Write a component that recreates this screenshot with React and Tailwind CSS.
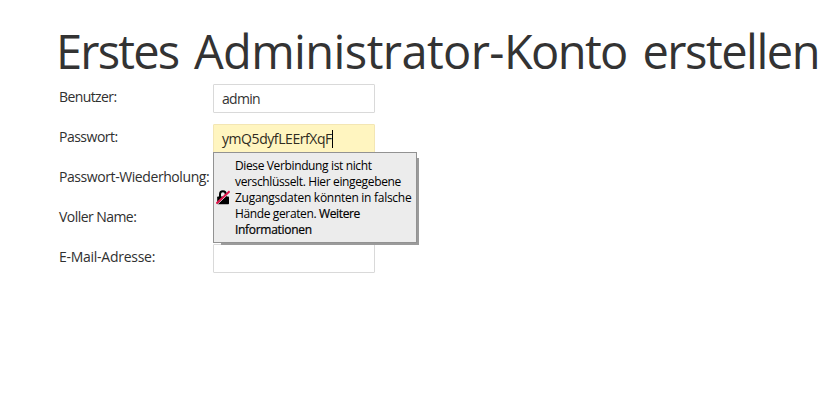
const labelCls = "w-[154px] pt-[3px] pl-[2px] text-[14px] leading-[20px] whitespace-nowrap text-[#303030]";
const fieldCls = "flex h-[29px] w-[162px] items-center rounded-[1px] border px-[8px] text-[14px] leading-[20px] whitespace-nowrap";
const boldCls = "[-webkit-text-stroke:0.2px_black]";

function Row({ label, spacing, children }) {
  return (
    <div className="flex h-[40px] items-start">
      <div className={labelCls}>
        <span className={spacing}>{label}</span>
      </div>
      {children}
    </div>
  );
}

function InsecureLock() {
  return (
    <svg width="14" height="15" viewBox="0 0 14 15" className="block shrink-0">
      <path d="M4 7.5V4.2a2.9 2.9 0 0 1 5.8 0V7.5" fill="none" stroke="#000" strokeWidth="2" />
      <rect x="1.2" y="6.4" width="11.8" height="7.8" rx="0.8" fill="#000" />
      <path d="M1.2 14.4L14.2 2.2" stroke="#ececec" strokeWidth="1" />
      <path d="M0.4 13.6L13.6 1.2" stroke="#e0184c" strokeWidth="2" />
    </svg>
  );
}

function Warning() {
  return (
    <div className="absolute top-[27px] left-[-1px] z-10 h-[91px] w-[204px]">
      <div className="absolute top-[6px] left-[8px] h-[87px] w-[198px] bg-[#9b9b9b] blur-[0.4px]" />
      <div className="relative flex h-full items-center border border-[#929292] bg-[#ececec] pl-[2px] text-black">
        <InsecureLock />
        <div className="ml-[5px] text-[12px] leading-[16px] whitespace-nowrap">
          <div><span className="tracking-[-0.37px]">Diese Verbindung ist nicht</span></div>
          <div><span className="tracking-[-0.36px]">verschlüsselt. Hier eingegebene</span></div>
          <div><span className="tracking-[-0.28px]">Zugangsdaten könnten in falsche</span></div>
          <div><span className="tracking-[-0.37px]">Hände geraten. <span className={boldCls}>Weitere</span></span></div>
          <div><span className={`${boldCls} tracking-[-0.3px]`}>Informationen</span></div>
        </div>
      </div>
    </div>
  );
}

export default function App() {
  return (
    <div className="h-[416px] w-[822px] overflow-hidden bg-white pt-[19px] pl-[57px] font-['Open_Sans',sans-serif]">
      <h1 className="-ml-[1px] h-[65px] text-[47px] leading-[64px] whitespace-nowrap text-[#333333] [word-spacing:5px]">
        <span className="tracking-[-1.8px]">Erstes </span>
        <span className="tracking-[-0.6px]">Administrator-</span>
        <span className="tracking-[-1.6px]">Konto </span>
        <span className="tracking-[-1.5px]">erstellen</span>
      </h1>
      <Row label="Benutzer:" spacing="tracking-[-0.6px]">
        <div className={`${fieldCls} ml-[2px] border-[#d9d9d9] bg-white text-[#333333]`}>
          <span className="tracking-[-0.7px]">admin</span>
        </div>
      </Row>
      <Row label="Passwort:" spacing="tracking-[-0.5px]">
        <div className={`${fieldCls} relative ml-[2px] border-[#f3e6b4] bg-[#fff5c0] text-[#302c20]`}>
          <span className="tracking-[-0.43px]">ymQ5dyfLEErfXqF</span>
          <span className="h-[18px] w-px bg-black" />
          <Warning />
        </div>
      </Row>
      <Row label="Passwort-Wiederholung:" spacing="tracking-[-0.42px]">
        <div className={`${fieldCls} ml-[2px] border-[#d9d9d9] bg-white`} />
      </Row>
      <Row label="Voller Name:" spacing="tracking-[-0.55px]">
        <div className={`${fieldCls} ml-[2px] border-[#d9d9d9] bg-white`} />
      </Row>
      <Row label="E-Mail-Adresse:" spacing="tracking-[-0.27px]">
        <div className={`${fieldCls} ml-[2px] border-[#d9d9d9] bg-white`} />
      </Row>
    </div>
  );
}
